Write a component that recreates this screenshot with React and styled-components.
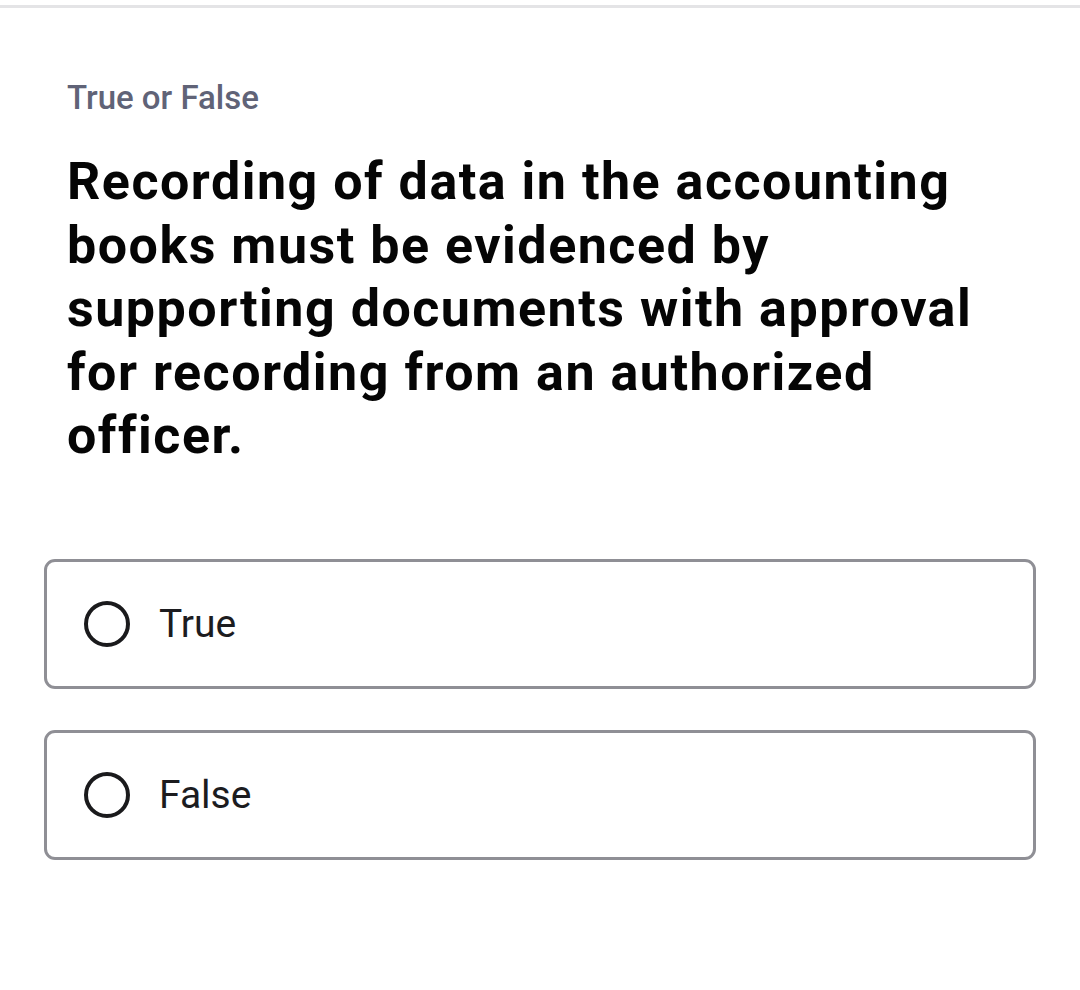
import React from "react";
import styled, { createGlobalStyle } from "styled-components";

const Global = createGlobalStyle`
  html, body { margin: 0; padding: 0; background: #ffffff; }
  body { font-family: Roboto, "Liberation Sans", sans-serif; }
`;

const Page = styled.div`
  width: 1080px;
  min-height: 990px;
  background: #fff;
`;

const TopRule = styled.div`
  margin-top: 5px;
  height: 3px;
  background: #e4e4e6;
`;

const Content = styled.main`
  padding: 70px 44px 0 44px;
  display: flex;
  flex-direction: column;
`;

const Label = styled.div`
  padding-left: 23px;
  font-size: 33px;
  line-height: 40px;
  font-weight: 500;
  color: #606377;
`;

const Question = styled.h1`
  margin: 32px 0 0 0;
  padding: 0 23px;
  font-size: 52px;
  line-height: 63.5px;
  letter-spacing: 1.5px;
  font-weight: 700;
  color: #050505;
`;

const Options = styled.div`
  margin-top: 91px;
  display: flex;
  flex-direction: column;
  gap: 41px;
`;

const Option = styled.label`
  box-sizing: border-box;
  height: 130px;
  display: flex;
  align-items: center;
  gap: 29px;
  padding-left: 37px;
  border: 3px solid #8f8f95;
  border-radius: 11px;
  cursor: pointer;
`;

const Radio = styled.span`
  box-sizing: border-box;
  width: 46px;
  height: 46px;
  border-radius: 50%;
  border: 4px solid #1a1a1c;
  flex: none;
`;

const OptionText = styled.span`
  font-size: 39px;
  font-weight: 400;
  color: #1c1c1f;
`;

export default function App() {
  return (
    <Page>
      <Global />
      <TopRule />
      <Content>
        <Label>True or False</Label>
        <Question>
          Recording of data in the accounting books must be evidenced by
          supporting documents with approval for recording from an authorized
          officer.
        </Question>
        <Options>
          {["True", "False"].map((o) => (
            <Option key={o}>
              <Radio />
              <OptionText>{o}</OptionText>
            </Option>
          ))}
        </Options>
      </Content>
    </Page>
  );
}
